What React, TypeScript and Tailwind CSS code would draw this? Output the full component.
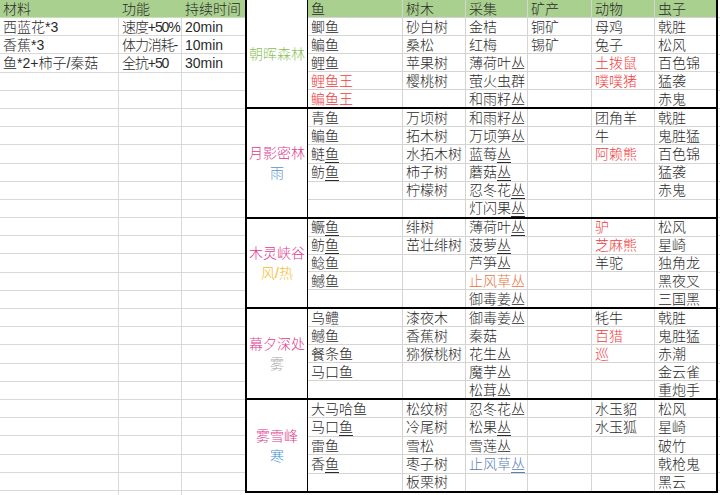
import React from "react";

type Group = {
  labels: { t: string; c: string }[];
  h: string;
  rows: string[][];
};

const RED = new Set([
  "鲤鱼王",
  "鳊鱼王",
  "土拨鼠",
  "噗噗猪",
  "阿赖熊",
  "驴",
  "芝麻熊",
  "百猎",
  "巡",
]);

const groups: Group[] = [
  {
    labels: [{ t: "朝晖森林", c: "text-[#8cbf57]" }],
    h: "h-[109px]",
    rows: [
      ["鲫鱼", "砂白树", "金桔", "铜矿", "母鸡", "戟胜"],
      ["鳊鱼", "桑松", "红梅", "锡矿", "兔子", "松风"],
      ["鲤鱼", "苹果树", "薄荷叶丛", "", "土拨鼠", "百色锦"],
      ["鲤鱼王", "樱桃树", "萤火虫群", "", "噗噗猪", "猛袭"],
      ["鳊鱼王", "", "和雨籽丛", "", "", "赤鬼"],
    ],
  },
  {
    labels: [
      { t: "月影密林", c: "text-[#e0398c]" },
      { t: "雨", c: "text-[#5b95cf]" },
    ],
    h: "h-[110px]",
    rows: [
      ["青鱼", "万顷树", "和雨籽丛", "", "团角羊", "戟胜"],
      ["鳊鱼", "拓木树", "万顷笋丛", "", "牛", "鬼胜猛"],
      ["鲢鱼", "水拓木树", "蓝莓丛", "", "阿赖熊", "百色锦"],
      ["鲂鱼", "柿子树", "蘑菇丛", "", "", "猛袭"],
      ["", "柠檬树", "忍冬花丛", "", "", "赤鬼"],
      ["", "", "灯闪果丛", "", "", ""],
    ],
  },
  {
    labels: [
      { t: "木灵峡谷", c: "text-[#e0398c]" },
      { t: "风/热", c: "text-[#f5bd1f]" },
    ],
    h: "h-[90px]",
    rows: [
      ["鳜鱼", "绯树", "薄荷叶丛", "", "驴", "松风"],
      ["鲂鱼", "茁壮绯树", "菠萝丛", "", "芝麻熊", "星崎"],
      ["鲶鱼", "", "芦笋丛", "", "羊驼", "独角龙"],
      ["鳡鱼", "", "止风草丛#o", "", "", "黑夜叉"],
      ["", "", "御毒姜丛", "", "", "三国黑"],
    ],
  },
  {
    labels: [
      { t: "幕夕深处", c: "text-[#e0398c]" },
      { t: "雾", c: "text-[#a6a6a6]" },
    ],
    h: "h-[91px]",
    rows: [
      ["乌鳢", "漆夜木", "御毒姜丛#u", "", "牦牛", "戟胜"],
      ["鳡鱼", "香蕉树", "秦菇", "", "百猎", "鬼胜猛"],
      ["餐条鱼", "猕猴桃树", "花生丛", "", "巡", "赤潮"],
      ["马口鱼", "", "魔芋丛", "", "", "金云雀"],
      ["", "", "松茸丛", "", "", "重炮手"],
    ],
  },
  {
    labels: [
      { t: "雾雪峰", c: "text-[#e0398c]" },
      { t: "寒", c: "text-[#3a8fd6]" },
    ],
    h: "h-[93px]",
    rows: [
      ["大马哈鱼", "松纹树", "忍冬花丛", "", "水玉貂", "松风"],
      ["马口鱼", "冷尾树", "松果丛", "", "水玉狐", "星崎"],
      ["雷鱼", "雪松", "雪莲丛", "", "", "破竹"],
      ["香鱼", "枣子树", "止风草丛#b", "", "", "戟枪鬼"],
      ["", "板栗树", "", "", "", "黑云"],
    ],
  },
];

const widths = ["w-[95px]", "w-[63px]", "w-[62px]", "w-[64px]", "w-[63px]", "w-[61px]"];

function CellText({ v, col }: { v: string; col: number }) {
  if (!v) return null;
  let text = v;
  let color = "";
  let mode = "";
  if (v.includes("#")) {
    const [a, b] = v.split("#");
    text = a;
    if (b === "o") color = "text-[#e8733a]";
    if (b === "b") color = "text-[#5a80b6]";
    if (b === "u") mode = "all";
  }
  if (RED.has(text)) color = "text-[#f23c3c]";
  const u = "underline underline-offset-[3px] decoration-[0.5px]";
  if (mode === "all") {
    return <span className={`${u} ${color}`}>{text}</span>;
  }
  if (col === 0) {
    const i = text.indexOf("鱼");
    if (i >= 0) {
      return (
        <span className={color}>
          {text.slice(0, i)}
          <span className={u}>{text.slice(i)}</span>
        </span>
      );
    }
  }
  if (col === 2 && text.endsWith("丛")) {
    return (
      <span className={color}>
        {text.slice(0, -1)}
        <span className={u}>丛</span>
      </span>
    );
  }
  return <span className={color}>{text}</span>;
}

function DataRow({ cells, last, header }: { cells: string[]; last: boolean; header?: boolean }) {
  return (
    <div
      className={`flex flex-1 min-h-0 ${last ? "" : "border-b border-[#d4d4d4]"} ${
        header ? "bg-[#a9d08e]" : ""
      }`}
    >
      {cells.map((v, i) => (
        <div
          key={i}
          className={`${widths[i]} shrink-0 ${
            i < 5 ? "border-r border-[#d4d4d4]" : ""
          } ${header ? "border-[#a9d08e]" : ""} px-[3px] overflow-hidden whitespace-nowrap flex items-center leading-[16px]`}
        >
          {header ? <span>{v}</span> : <CellText v={v} col={i} />}
        </div>
      ))}
    </div>
  );
}

const leftRows: string[][] = [
  ["西蓝花*3", "速度+50%", "20min"],
  ["香蕉*3", "体力消耗-", "10min"],
  ["鱼*2+柿子/秦菇", "全抗+50", "30min"],
];

export default function App() {
  const fill = Array.from({ length: 24 }, () => ["", "", ""]);
  const all = [...leftRows, ...fill];
  return (
    <div
      className="w-[720px] h-[495px] overflow-hidden bg-white text-[14px] font-light text-[#2a2a2a] flex"
      style={{ fontFamily: '"Liberation Sans", "Noto Sans CJK SC", sans-serif' }}
    >
      {/* left table */}
      <div className="w-[245px] shrink-0 flex flex-col">
        <div className="flex h-[18px] shrink-0 bg-[#a9d08e] border-b border-[#c9dfb9]">
          <div className="w-[119px] shrink-0 px-[3px] flex items-center leading-[16px]">材料</div>
          <div className="w-[63px] shrink-0 px-[3px] flex items-center leading-[16px]">功能</div>
          <div className="w-[63px] shrink-0 px-[3px] flex items-center leading-[16px]">持续时间</div>
        </div>
        {all.map((r, i) => (
          <div key={i} className="flex h-[18.2px] shrink-0 border-b border-[#d9d9d9]">
            <div className="w-[119px] shrink-0 border-r border-[#d9d9d9] px-[3px] overflow-hidden whitespace-nowrap flex items-center leading-[16px]">
              {r[0]}
            </div>
            <div className="w-[63px] shrink-0 border-r border-[#d9d9d9] px-[3px] overflow-hidden whitespace-nowrap flex items-center leading-[16px] tracking-[-1.1px]">
              {r[1]}
            </div>
            <div className="w-[63px] shrink-0 px-[3px] overflow-hidden whitespace-nowrap flex items-center leading-[16px]">
              {r[2]}
            </div>
          </div>
        ))}
      </div>

      {/* right table */}
      <div className="w-[473px] shrink-0 self-start flex flex-col border-l-2 border-r-2 border-black">
        {groups.map((g, gi) => {
          const rows = gi === 0 ? [["鱼", "树木", "采集", "矿产", "动物", "虫子"], ...g.rows] : g.rows;
          return (
            <div key={gi} className={`flex ${g.h} border-b-2 border-black`}>
              <div className="w-[61px] shrink-0 border-r border-black flex flex-col items-center justify-center leading-[20px]">
                {g.labels.map((l, li) => (
                  <div key={li} className={l.c}>
                    {l.t}
                  </div>
                ))}
              </div>
              <div className="flex-1 flex flex-col">
                {rows.map((r, ri) => (
                  <DataRow key={ri} cells={r} last={ri === rows.length - 1} header={gi === 0 && ri === 0} />
                ))}
              </div>
            </div>
          );
        })}
      </div>
      <div className="flex-1 flex flex-col">
        {Array.from({ length: 28 }).map((_, i) => (
          <div key={i} className="h-[18.2px] shrink-0 border-b border-[#d9d9d9]" />
        ))}
      </div>
    </div>
  );
}
